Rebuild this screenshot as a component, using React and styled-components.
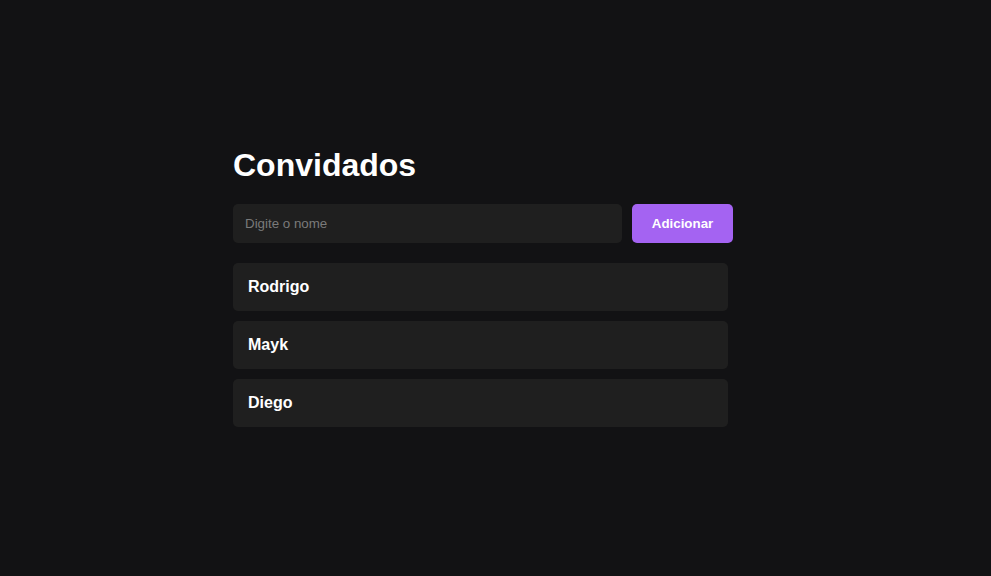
import React, { useState } from 'react'
import styled, { createGlobalStyle } from 'styled-components'

const GlobalStyle = createGlobalStyle`
  * { box-sizing: border-box; }
  body {
    margin: 0;
    background: #121214;
    font-family: "Liberation Sans", Arial, sans-serif;
    color: #fff;
  }
`

const Page = styled.div`
  min-height: 100vh;
  display: flex;
  align-items: center;
  justify-content: center;
`

const Container = styled.div`
  width: 525px;
  padding-bottom: 2px;
`

const Title = styled.h1`
  margin: 0 0 20px;
  font-size: 32px;
  font-weight: 700;
  line-height: 37px;
`

const Form = styled.form`
  display: flex;
  gap: 10px;
  width: 500px;
  margin-bottom: 20px;
`

const Input = styled.input`
  flex: 1;
  height: 39px;
  border: none;
  border-radius: 5px;
  background: #1f1f1f;
  color: #fff;
  padding: 0 12px;
  font-family: inherit;
  font-size: 13.333px;
  outline: none;

  &::placeholder {
    color: #7a7a7a;
  }
`

const Button = styled.button`
  width: 101px;
  height: 39px;
  border: none;
  border-radius: 5px;
  background: #a463f2;
  color: #fff;
  font-family: inherit;
  font-size: 13.333px;
  font-weight: 700;
  cursor: pointer;
`

const List = styled.div`
  display: flex;
  flex-direction: column;
  gap: 10px;
  width: 495px;
`

const Card = styled.div`
  height: 48px;
  display: flex;
  align-items: center;
  padding: 0 15px;
  border-radius: 5px;
  background: #1f1f1f;
  font-size: 16px;
  font-weight: 700;
`

const App = () => {
  const [name, setName] = useState('')
  const [guests, setGuests] = useState(['Rodrigo', 'Mayk', 'Diego'])

  const add = (e) => {
    e.preventDefault()
    if (!name.trim()) return
    setGuests([...guests, name.trim()])
    setName('')
  }

  return (
    <>
      <GlobalStyle />
      <Page>
        <Container>
          <Title>Convidados</Title>
          <Form onSubmit={add}>
            <Input
              placeholder="Digite o nome"
              value={name}
              onChange={(e) => setName(e.target.value)}
            />
            <Button type="submit">Adicionar</Button>
          </Form>
          <List>
            {guests.map((g, i) => (
              <Card key={i}>{g}</Card>
            ))}
          </List>
        </Container>
      </Page>
    </>
  )
}

export default App
